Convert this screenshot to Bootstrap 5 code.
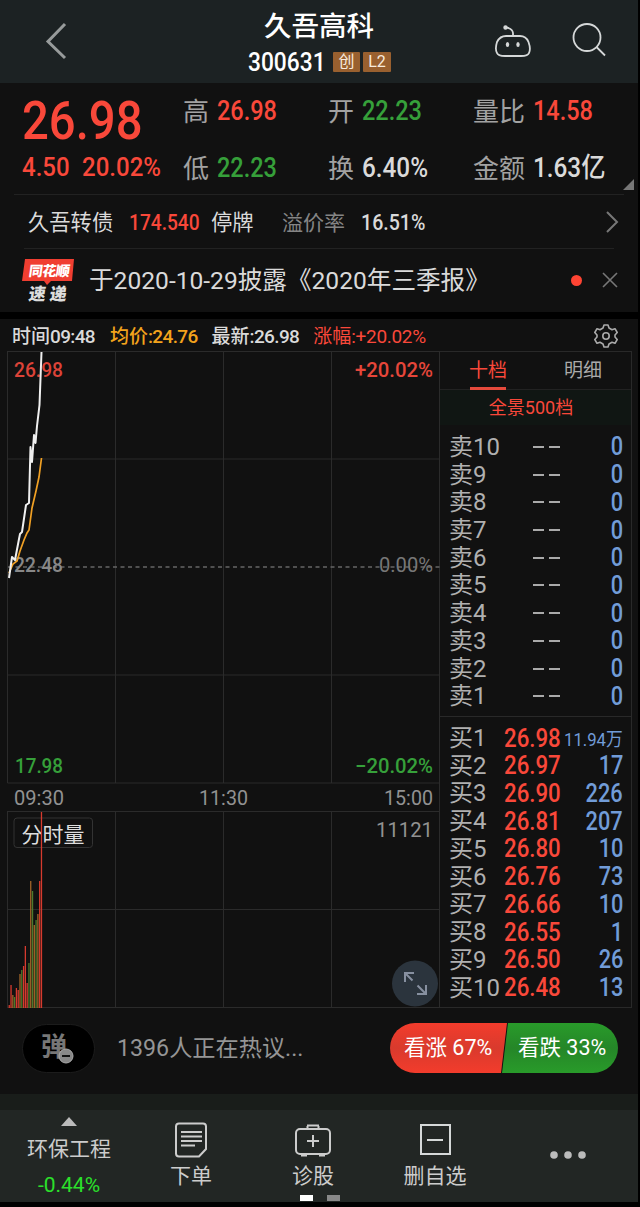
<!DOCTYPE html>
<html lang="zh-CN">
<head>
<meta charset="utf-8">
<meta name="viewport" content="width=device-width, initial-scale=1">
<title>久吾高科 300631</title>
<link rel="stylesheet" href="https://cdn.jsdelivr.net/npm/bootstrap@5.3.0/dist/css/bootstrap.min.css">
<style>
:root{--up:#f9483a;--down:#36a03a;--txt:#dadada;--dim:#a2a2a2;--ln:#292929;--qty:#719cd8}
body{background:#000;color:var(--txt);font-family:Roboto,"Noto Sans CJK SC",sans-serif;line-height:1;width:640px;height:1207px;overflow:hidden}
svg{display:block;flex:none}
svg text{font-family:Roboto,"Noto Sans CJK SC",sans-serif}
.phone{width:638px;background:#111}
.up{color:var(--up)}.down{color:var(--down)}.dim{color:var(--dim)}
.num{display:inline-block;font-weight:500;transform:scaleX(.87);transform-origin:left center;white-space:nowrap}
.num-end{transform-origin:right center}
.topbar{height:83px;background:#1c2223;display:grid;grid-template-columns:220px 198px 1fr}
.topbar h1{font-size:27.5px;font-weight:500;color:#fff;line-height:1;margin:13px 0 0}
.code{font-size:25px;color:#fff;width:79px}
.code .num{transform:scaleX(.91)}
.tag{height:20px;background:#99602f;color:#f8ebdd;font-size:16px;border-radius:1px;line-height:20px;text-align:center}
.quote{height:112px;display:grid;grid-template-columns:161px 145px 145px 1fr;padding-left:22px;position:relative}
.quote .cell{height:57px;font-size:26px;white-space:nowrap}
.quote .num{font-size:27px;margin-left:8px}
.quote .big{font-size:54px;transform:scaleX(.875);margin:0}
.quote .chg{font-size:26px;margin:0;transform:scaleX(.925)}
.corner{position:absolute;right:4px;bottom:5px}
.rule-a{height:1px;background:#222;margin:0 14px}
.bond{height:53px;font-size:21.3px;display:grid;grid-template-columns:101px 82px 71px 79px 1fr 16px;padding:3px 18px 0 28px}
.bond svg{margin-top:-3px}
.news{height:63px;padding:2px 20px 0 22px;font-size:24.6px}
.dot{width:11px;height:11px;background:#ff4433;margin-top:-2px}
.charthead{height:32px;font-size:19px;font-weight:500;padding:3px 20px 0 12px;background:#111}
.charthead i{font-style:normal;letter-spacing:-.65px}
.book{width:192px;border:1px solid var(--ln);border-left:0;height:657px}
.tabs{height:38px;border-bottom:1px solid #222;font-size:19px}
.tabs span{height:38px;line-height:37px;text-align:center;white-space:nowrap}
.tabs .on{border-bottom:3px solid #e64a3c;width:36px;color:var(--up);display:flex;justify-content:center}
.full{height:35px;background:#101613;font-size:18px;color:var(--up);line-height:36px;padding-right:9px}
.level{height:27.72px;display:grid;grid-template-columns:55px 57px minmax(0,1fr);padding:0 8px 0 9px;font-size:24px;align-items:center;white-space:nowrap}
.level .nm{color:#b0b0b0}
.level .pr,.level .qt{font-size:25px}
.level .pr{transform:scaleX(.89)}
.level .qt{color:var(--qty);justify-self:end}
.level .wan{font-size:19px;padding-top:3px;font-weight:400;transform:scaleX(.88)}
.talk{height:85px;padding:0 20px 7px 22px}
.danmu{width:73px;height:49px;background:#000;border:1px solid #1c1c1c;color:#777;font-size:26px;font-weight:700;position:relative;flex:none}
.danmu svg{position:absolute;left:35px;top:23px}
.hot{font-size:23.2px;color:#959595;margin-left:22px;padding-top:2px}
.vote{height:50px;font-size:21.5px;color:#fff;line-height:50px;white-space:nowrap}
.bull{width:117px;padding-left:14px;background:linear-gradient(#f33c2c,#d93a2d 50%,#f33c2c);clip-path:polygon(0 0,100% 0,calc(100% - 6px) 100%,0 100%);border-radius:25px 0 0 25px}
.bear{width:116px;margin-left:-5px;padding-left:16px;background:linear-gradient(#299b2a,#258628 50%,#299b2a);clip-path:polygon(6px 0,100% 0,100% 100%,0 100%);border-radius:0 25px 25px 0}
.strip{height:16px;background:#191d1a}
.dock{height:92px;background:#222624;font-size:21px;color:#ccc;display:grid;grid-template-columns:138px 106px 138px 106px 1fr;position:relative}
.dock>div{display:flex;flex-direction:column;align-items:center}
.dock .lab{margin-top:8px}
.pager{position:absolute!important;left:300px;bottom:1px;gap:14px;flex-direction:row!important}
.pager b{width:13px;height:6px;background:#fff}
</style>
</head>
<body>
<div class="phone">
  <header class="topbar">
    <div class="d-flex align-items-center ps-5"><svg width="22" height="40" viewBox="0 0 22 40" style="margin:-2px 0 0 -3px"><path d="M20 3 3 20.500 20 37" fill="none" stroke="#979b9b" stroke-width="3"/></svg></div>
    <div class="text-center">
      <h1>久吾高科</h1>
      <div class="d-flex align-items-center ps-4 ms-1" style="margin-top:9px"><span class="code"><span class="num">300631</span></span><span class="tag" style="width:27px;margin-left:6px">创</span><span class="tag" style="width:28px;margin-left:3px">L2</span></div>
    </div>
    <div class="d-flex">
      <svg width="40" height="38" viewBox="0 0 40 38" style="margin:23px 0 0 76px" fill="none" stroke="#d5d8d8" stroke-width="1.8"><path d="M19 12.500V10Q18.500 5.500 12.500 4.500"/><circle cx="11.500" cy="4.500" r="1.300" fill="#d5d8d8"/><path d="M12 13H26Q32 13 34.500 19Q37 26 35 30Q34 33 27 33H11Q4 33 3 30Q.8 26 3 19Q6 13 12 13Z"/><ellipse cx="13.500" cy="21.500" rx="1.700" ry="2.500" fill="#d5d8d8" stroke="none"/><ellipse cx="24" cy="21.500" rx="1.700" ry="2.500" fill="#d5d8d8" stroke="none"/></svg>
      <svg width="36" height="36" viewBox="0 0 36 36" style="margin:22px 0 0 38px" fill="none" stroke="#d5d8d8" stroke-width="1.800"><circle cx="15" cy="15.500" r="13.500"/><path d="M24.500 25 33 33.500"/></svg>
    </div>
  </header>

  <section class="quote">
    <div>
      <div class="cell d-flex align-items-center" style="height:76px"><span class="num big up">26.98</span></div>
      <div class="d-flex up" style="margin-top:-5px"><span class="num chg" style="width:60px">4.50</span><span class="num chg">20.02%</span></div>
    </div>
    <div><div class="cell d-flex align-items-center"><span class="dim">高</span><span class="num up">26.98</span></div><div class="cell d-flex align-items-center"><span class="dim">低</span><span class="num down">22.23</span></div></div>
    <div><div class="cell d-flex align-items-center"><span class="dim">开</span><span class="num down">22.23</span></div><div class="cell d-flex align-items-center"><span class="dim">换</span><span class="num" style="transform:scaleX(.9)">6.40%</span></div></div>
    <div><div class="cell d-flex align-items-center"><span class="dim">量比</span><span class="num up">14.58</span></div><div class="cell d-flex align-items-center"><span class="dim">金额</span><span class="num" style="transform:scaleX(.9)">1.63亿</span></div></div>
    <svg class="corner" width="11" height="11"><path d="M11 0V11H0Z" fill="#777"/></svg>
  </section>
  <div class="rule-a" style="margin-top:-1px"></div>
  <section class="bond align-items-center">
    <span>久吾转债</span><span class="num up" style="font-size:22px">174.540</span><span>停牌</span><span style="color:#858585;font-size:21px">溢价率</span><span class="num" style="font-size:22px;transform:scaleX(.89)">16.51%</span>
    <svg width="16" height="24" viewBox="0 0 16 24"><path d="M3 2 13 12 3 22" stroke="#777" stroke-width="2" fill="none"/></svg>
  </section>
  <div class="rule-a mx-4"></div>
  <section class="news d-flex align-items-center">
    <svg width="53" height="46" viewBox="0 0 53 46" style="margin-top:-3px"><path d="M3 2H52L50 24H29L25 28 22 24H0Z" fill="#f03e31"/><g transform="skewX(-8)" font-weight="900"><text x="9" y="19" font-size="14" fill="#fff" textLength="41">同花顺</text><text x="12" y="43" font-size="17" fill="#ddd" textLength="38">速递</text></g></svg>
    <span style="margin-left:14px;white-space:nowrap">于2020-10-29披露《2020年三季报》</span>
    <span class="dot rounded-circle ms-auto"></span>
    <svg width="16" height="16" viewBox="0 0 16 16" style="margin:-3px 0 0 20px"><path d="M1 1 15 15M15 1 1 15" stroke="#777" stroke-width="1.600"/></svg>
  </section>
</div>

<main class="phone" style="margin-top:7px">
  <div class="charthead d-flex align-items-center">
    <span>时间<i>09:48</i></span><span style="color:#f3a31c;margin-left:15px">均价<i>:24.76</i></span><span style="margin-left:14px">最新<i>:26.98</i></span><span class="up fw-normal" style="margin-left:14px">涨幅<i style="letter-spacing:-.3px">:+20.02%</i></span>
    <svg class="ms-auto" width="24" height="24" viewBox="0 0 24 24" style="margin-top:-2px" fill="none" stroke="#aaa" stroke-width="1.600" stroke-linejoin="round"><path d="M10 1H14L15 4L18 5.700L21 4.700L23.200 8.500L21 11V13L23.200 15.500L21 19.300L18 18.300L15 20L14 23H10L9 20L6 18.300L3 19.300L.8 15.500L3 13V11L.8 8.500L3 4.700L6 5.700L9 4Z"/><circle cx="12" cy="12" r="3.200"/></svg>
  </div>
  <div class="d-flex">
    <svg width="440" height="658" viewBox="0 351 440 658">
      <g stroke="#2b2b2b" fill="none"><path d="M7.500 351.500H440M7.500 459H440M7.500 675H440M7.500 783H440M7.500 811.500H440M7.500 909.500H440M7.500 1007.500H440" /><path d="M7.500 351V783M115.500 351V783M223.500 351V783M331.500 351V783M439.500 351V1008M7.500 811V1008M115.500 811V1008M223.500 811V1008M331.500 811V1008"/></g>
      <path d="M8 567H440" stroke="#666" stroke-width="1.300" stroke-dasharray="4 3.500"/>
      <g font-size="20" font-weight="500">
        <text x="14" y="376.500" fill="#dc4338" textLength="49" lengthAdjust="spacingAndGlyphs">26.98</text>
        <text x="355" y="376.500" fill="#e6463a" textLength="78" lengthAdjust="spacingAndGlyphs">+20.02%</text>
        <text x="14" y="572" fill="#888" textLength="49" lengthAdjust="spacingAndGlyphs">22.48</text>
        <text x="379" y="572" fill="#777" textLength="54" lengthAdjust="spacingAndGlyphs" font-weight="400">0.00%</text>
        <text x="15" y="772.500" fill="#36a03a" textLength="48" lengthAdjust="spacingAndGlyphs">17.98</text>
        <text x="355" y="772.500" fill="#36a03a" textLength="78" lengthAdjust="spacingAndGlyphs">−20.02%</text>
      </g>
      <g font-size="21" fill="#929292">
        <text x="14" y="805" textLength="50" lengthAdjust="spacingAndGlyphs">09:30</text>
        <text x="199" y="805" textLength="49" lengthAdjust="spacingAndGlyphs">11:30</text>
        <text x="384" y="805" textLength="49" lengthAdjust="spacingAndGlyphs">15:00</text>
        <text x="376" y="837" textLength="57" lengthAdjust="spacingAndGlyphs">11121</text>
      </g>
      <rect x="14" y="818" width="78.500" height="29.500" rx="3" fill="#111" stroke="#333"/>
      <text x="21.500" y="841.500" font-size="21" fill="#ddd">分时量</text>
      <path d="M9 573 13 564 17 561 20 551 24 540 27 533 29 530 32 508 36 491 39 477 41.500 458" fill="none" stroke="#f0a024" stroke-width="1.700"/>
      <path d="M9 578 12 557 15 560 19 539 20 534 22 532 26 505 29 503 30.500 447 32 462 34 435 35.500 443 37 426 39.500 405 41.500 352" fill="none" stroke="#f0f0f0" stroke-width="2" stroke-linejoin="round"/>
      <g id="volume"></g>
      <circle cx="415" cy="983.500" r="23" fill="#2b343d"/>
      <path d="M405 982V973H414M405 973 412.500 980.500M426 985V994H417M426 994 417.500 985.500" stroke="#8790a0" stroke-width="2" fill="none"/>
    </svg>
    <aside class="book">
      <div class="tabs d-flex"><span class="on" style="margin-left:30px">十档</span><span style="margin-left:58px;color:#aaa">明细</span></div>
      <div class="full text-center">全景500档</div>
      <div id="asks" style="margin-top:8px"></div>
      <div style="height:1px;background:#292929;margin:6px 0 7px"></div>
      <div id="bids"></div>
    </aside>
  </div>
  <section class="talk d-flex align-items-center">
    <div class="danmu rounded-pill d-flex align-items-center ps-3"><span style="margin:-3px 0 0 2px">弹</span><svg width="16" height="16"><circle cx="8" cy="8" r="7" fill="#888" stroke="#aaa"/><path d="M4 8H12" stroke="#111" stroke-width="2"/></svg></div>
    <span class="hot">1396人正在热议...</span>
    <div class="vote d-flex ms-auto"><span class="bull">看涨 67%</span><span class="bear">看跌 33%</span></div>
  </section>
  <div class="strip"></div>
  <footer class="dock">
    <div><svg width="16" height="9" style="margin-top:7px"><path d="M8 0 16 9H0Z" fill="#bbb"/></svg><span style="margin-top:13px">环保工程</span><span style="margin-top:15px;color:#2be02b">-0.44%</span></div>
    <div><svg width="32" height="36" viewBox="0 0 32 36" style="margin-top:12px" fill="none" stroke="#ccc" stroke-width="2"><path d="M4 1.500H28Q31 1.500 31 4.500V27L24 34.500H4Q1 34.500 1 31.500V4.500Q1 1.500 4 1.500Z"/><path d="M6 10H27M6 14.500H27M6 19H27M6 23.500H20"/></svg><span class="lab">下单</span></div>
    <div><svg width="36" height="36" viewBox="0 0 36 36" style="margin-top:12px" fill="none" stroke="#ccc" stroke-width="2"><rect x="1" y="7" width="34" height="25" rx="4"/><path d="M12 3.500H24M12.500 4V6M23.500 4V6M6 33.500H12M24 33.500H30M18 13V25M12 19H24"/></svg><span class="lab">诊股</span></div>
    <div><svg width="32" height="36" viewBox="0 0 32 36" style="margin-top:12px" fill="none" stroke="#d5d8d8" stroke-width="2"><rect x="2" y="3" width="29" height="29"/><path d="M8 18H24"/></svg><span class="lab">删自选</span></div>
    <div><svg width="38" height="8" style="margin:41px 0 0 9px"><g fill="#bbb"><circle cx="5" cy="4" r="3.800"/><circle cx="19" cy="4" r="3.800"/><circle cx="33" cy="4" r="3.800"/></g></svg></div>
    <div class="pager"><b></b><b style="background:#888"></b></div>
  </footer>
</main>
<script src="https://cdn.jsdelivr.net/npm/bootstrap@5.3.0/dist/js/bootstrap.bundle.min.js"></script>
<script>
const bids=[["26.98","11.94万"],["26.97","17"],["26.90","226"],["26.81","207"],["26.80","10"],["26.76","73"],["26.66","10"],["26.55","1"],["26.50","26"],["26.48","13"]];
document.getElementById("asks").innerHTML=Array.from({length:10},(_,i)=>`<div class="level"><span class="nm">卖${10-i}</span><svg width="60" height="4"><path d="M29 2H40M45 2H56" stroke="#aaa" stroke-width="2"/></svg><span class="num num-end qt">0</span></div>`).join("");
document.getElementById("bids").innerHTML=bids.map(([p,q],i)=>`<div class="level"><span class="nm">买${i+1}</span><span class="num pr up">${p}</span><span class="num num-end qt${q.includes("万")?" wan":""}">${q}</span></div>`).join("");
// one bar per minute since the open: height and colour (r up, g down, o flat)
const vol=[[3,"r"],[23,"r"],[13,"o"],[11,"g"],[20,"r"],[18,"r"],[34,"o"],[38,"g"],[42,"r"],[62,"r"],[25,"r"],[45,"g"],[127,"o"],[117,"g"],[83,"o"],[88,"g"],[94,"o"],[127,"r"],[196,"r"]];
const tone={r:"#d63a2e",g:"#4c7a2c",o:"#a06428"};
document.getElementById("volume").innerHTML=vol.map(([h,c],i)=>`<rect x="${(8.6+i*1.79).toFixed(2)}" y="${1008-h}" width="1.3" height="${h}" fill="${tone[c]}"/>`).join("");
</script>
</body>
</html>
